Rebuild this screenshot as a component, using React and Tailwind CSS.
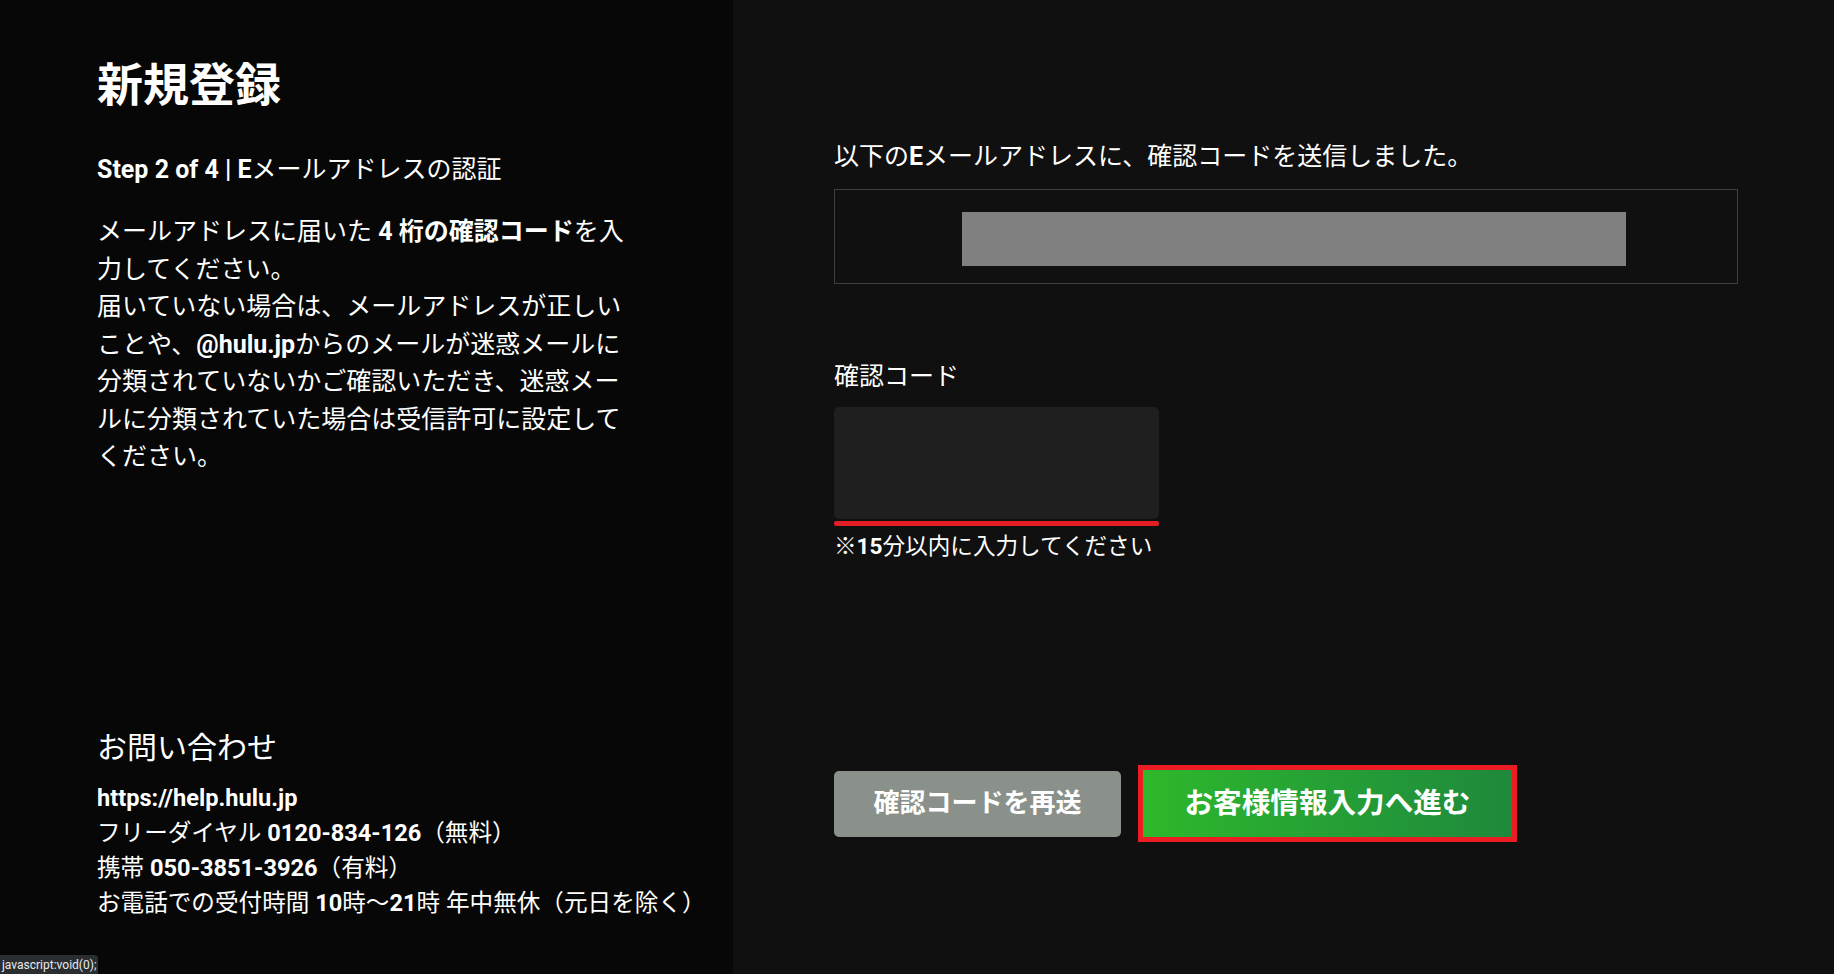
import React from "react";

const FONT = "font-['Roboto','Noto_Sans_CJK_JP',sans-serif]";

function B({ children }) {
  return <span className="font-bold">{children}</span>;
}

export default function App() {
  return (
    <div className={`relative flex h-[974px] w-full overflow-hidden text-white ${FONT}`}>
      {/* Left panel */}
      <div className="flex w-[733px] shrink-0 flex-col justify-between bg-[#060706] pb-[53px] pl-[97px] pt-[58px]">
        <div>
          <h1 className="text-[46px] font-bold leading-[55px]">新規登録</h1>
          <p className="mt-[39px] text-[25px] leading-[36px]">
            <B>Step 2 of 4 | E</B>メールアドレスの認証
          </p>
          <p className="mt-[25px] w-[540px] text-[25px] leading-[37.5px]">
            メールアドレスに届いた<B> 4 桁の確認コード</B>を入
            <br />
            力してください。
            <br />
            届いていない場合は、メールアドレスが正しい
            <br />
            ことや、<B>@hulu.jp</B>からのメールが迷惑メールに
            <br />
            分類されていないかご確認いただき、迷惑メー
            <br />
            ルに分類されていた場合は受信許可に設定して
            <br />
            ください。
          </p>
        </div>
        <div>
          <h2 className="text-[30px] leading-[40px]">お問い合わせ</h2>
          <div className="mt-[13px] text-[23.6px] leading-[35px]">
            <p>
              <B>https://help.hulu.jp</B>
            </p>
            <p>
              フリーダイヤル <B>0120-834-126</B>（無料）
            </p>
            <p>
              携帯 <B>050-3851-3926</B>（有料）
            </p>
            <p>
              お電話での受付時間 <B>10</B>時〜<B>21</B>時 年中無休（元日を除く）
            </p>
          </div>
        </div>
      </div>

      {/* Right panel */}
      <div className="flex flex-1 flex-col bg-[#0f100f] pl-[101px] pt-[139px]">
        <p className="text-[25px] leading-[36px]">
          以下の<B>E</B>メールアドレスに、確認コードを送信しました。
        </p>
        <div className="mt-[14px] h-[95px] w-[904px] border border-[#3e3f3e] pl-[127px] pt-[22px]">
          <div className="h-[54px] w-[664px] bg-[#808080]" />
        </div>

        <label className="mt-[75px] text-[25px] leading-[36px]">確認コード</label>
        <div className="mt-[12px] h-[112px] w-[325px] rounded-[5px] bg-[#1e1f1e]" />
        <div className="mt-[2px] h-[5px] w-[325px] rounded-[2px] bg-[#e41e25]" />
        <p className="mt-[4px] text-[22.6px] leading-[33px]">
          ※<B>15</B>分以内に入力してください
        </p>

        <div className="mt-[202px] flex items-center gap-[17px]">
          <button className="flex h-[66px] w-[287px] items-center justify-center rounded-[5px] bg-[#8a918a] text-[26px] font-bold text-white">
            確認コードを再送
          </button>
          <button className="flex h-[77px] w-[379px] items-center justify-center border-[5px] border-[#ec1c24] bg-linear-to-r from-[#2eb82a] to-[#1e893b] text-[28.6px] font-bold text-white">
            お客様情報入力へ進む
          </button>
        </div>
      </div>

      {/* Browser status bar overlay */}
      <div className="absolute bottom-0 left-0 flex h-[19px] items-center rounded-tr-[4px] bg-[#2a2e31] px-[2px] text-[12px] leading-none text-[#e8eaed]">
        javascript:void(0);
      </div>
    </div>
  );
}
